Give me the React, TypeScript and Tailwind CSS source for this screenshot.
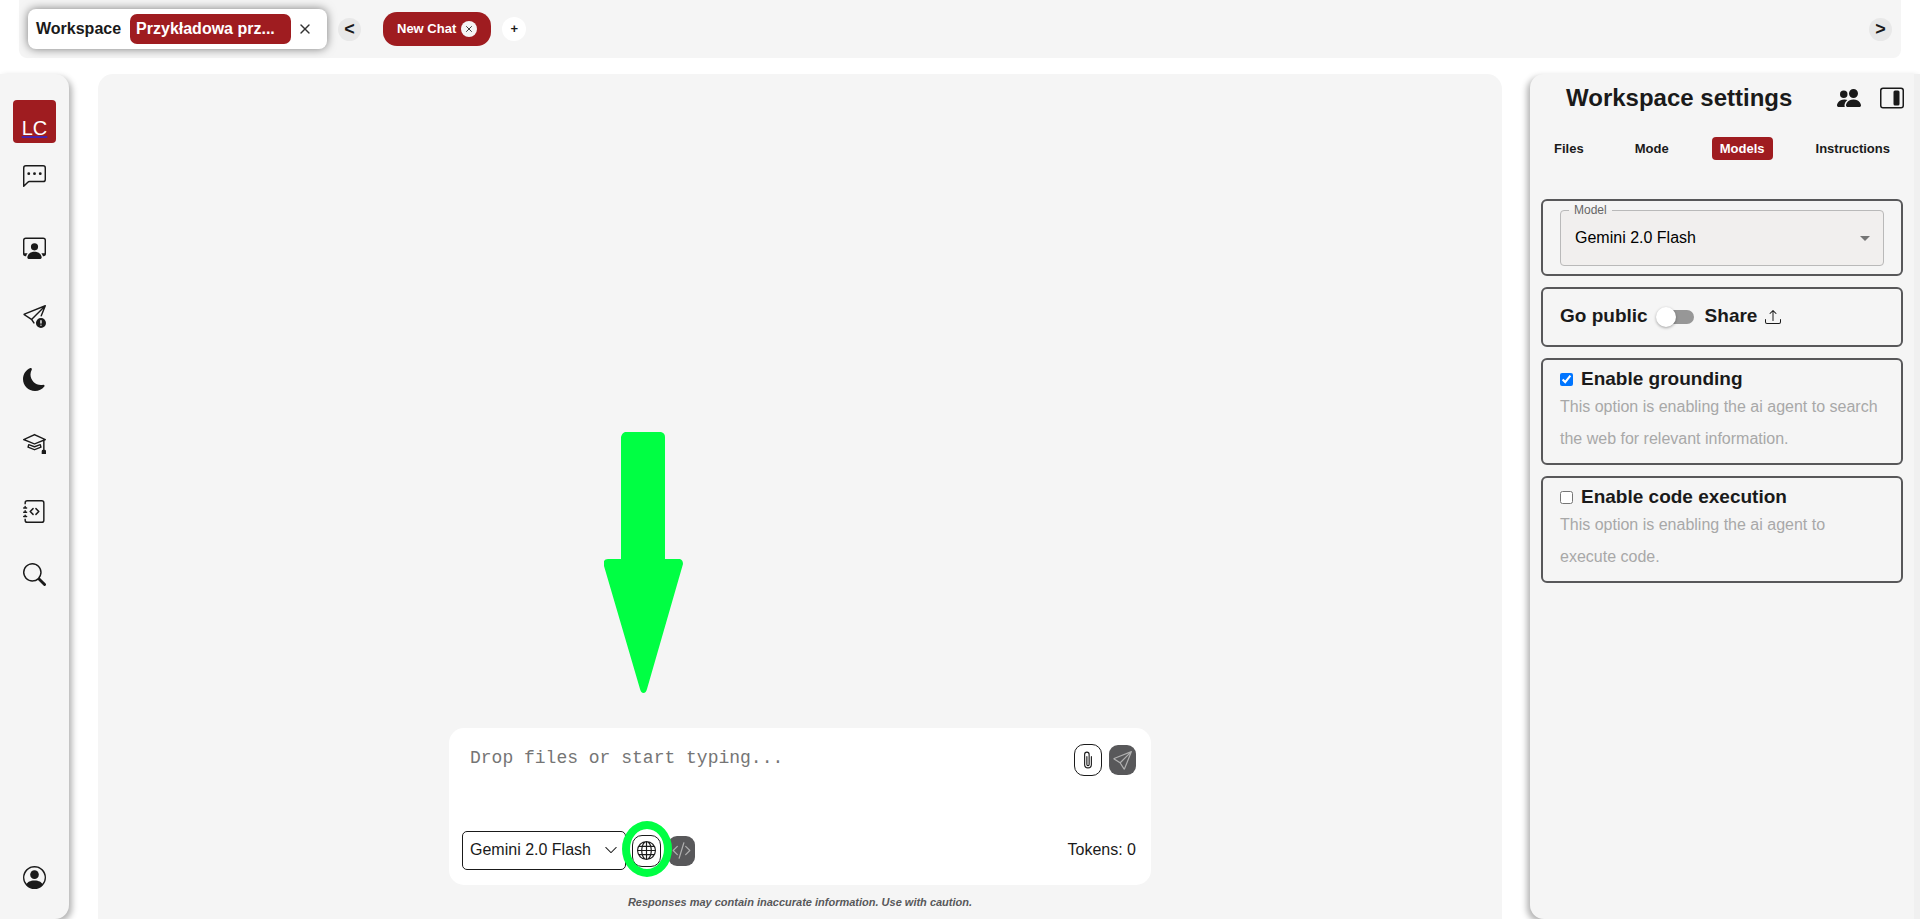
import React, { useState } from 'react';
import { X } from 'lucide-react';
import {
  BsChatLeftDots,
  BsChevronDown,
  BsCodeSlash,
  BsGlobe,
  BsJournalCode,
  BsLayoutSidebarInsetReverse,
  BsMoonFill,
  BsMortarboard,
  BsPaperclip,
  BsPeopleFill,
  BsPersonCircle,
  BsPersonWorkspace,
  BsSearch,
  BsSend,
  BsSendExclamation,
  BsUpload,
} from 'react-icons/bs';

const NAV_ITEMS = [
  { label: 'Chats', icon: BsChatLeftDots, className: 'mt-[22px]' },
  { label: 'Workspaces', icon: BsPersonWorkspace, className: 'mt-12' },
  { label: 'Report', icon: BsSendExclamation, className: 'mt-[46px]' },
  { label: 'Theme', icon: BsMoonFill, className: 'mt-10' },
  { label: 'Learn', icon: BsMortarboard, className: 'mt-10' },
  { label: 'Docs', icon: BsJournalCode, className: 'mt-[46px]' },
  { label: 'Search', icon: BsSearch, className: 'mt-10' },
];

const TABS = ['Files', 'Mode', 'Models', 'Instructions'];

const TopBar: React.FC = () => (
  <header className="mx-[19px] flex h-[58px] shrink-0 items-center rounded-b-lg bg-[#f5f5f5] px-[9px]">
    <div className="flex h-10 w-[299px] items-center rounded-lg bg-white pl-2 shadow-[0_0_10px_rgba(0,0,0,0.5)]">
      <span className="font-bold">Workspace</span>
      <button type="button" className="ml-[9px] h-[30px] w-[161px] whitespace-nowrap rounded-[7px] bg-[#9f1c20] px-[6px] text-left font-bold text-white">
        Przykładowa prz...
      </button>
      <button type="button" aria-label="Close workspace" className="ml-[6px]"><X size={16} strokeWidth={2} className="text-[#333333]" /></button>
    </div>
    <button type="button" className="ml-[11px] size-[23px] rounded-full bg-[#e8e8e8] text-lg font-bold leading-[22px]">&lt;</button>
    <div className="ml-[22px] flex h-[34px] items-center gap-[5px] rounded-[14px] bg-[#9f1c20] px-[14px]">
      <span className="text-[13px] font-bold text-white">New Chat</span>
      <button type="button" aria-label="Close chat" className="flex size-4 items-center justify-center rounded-full bg-[#f5f5f5]"><X size={10} strokeWidth={2} /></button>
    </div>
    <button type="button" className="ml-[11px] size-6 rounded-full bg-white text-[13px] font-bold leading-[22px]">+</button>
    <button type="button" className="ml-auto size-[23px] rounded-full bg-[#e8e8e8] text-lg font-bold leading-[22px]">&gt;</button>
  </header>
);

const Sidebar: React.FC = () => (
  <nav className="flex w-[69px] shrink-0 flex-col items-center rounded-r-[14px] bg-[#f5f5f5] pb-[30px] pt-[26px] shadow-[3px_3px_6px_rgba(0,0,0,0.3)]">
    <a href="#" className="flex size-[43px] items-end justify-center rounded bg-[#9f1c20] pb-[3px] text-xl leading-6 text-white underline decoration-[#4a22a8] underline-offset-1">LC</a>
    {NAV_ITEMS.map(({ label, icon: Icon, className }) => (
      <button key={label} type="button" aria-label={label} className={className}><Icon size={23} /></button>
    ))}
    <button type="button" aria-label="Account" className="mt-auto"><BsPersonCircle size={23} /></button>
  </nav>
);

const Composer: React.FC = () => {
  const [text, setText] = useState('');

  return (
    <div className="relative flex h-[157px] w-1/2 flex-col justify-between rounded-[15px] bg-white pb-[15px] pl-[13px] pr-[15px] pt-4">
      <div className="flex items-start">
        <textarea
          aria-label="Message"
          value={text}
          onChange={e => setText(e.target.value)}
          placeholder="Drop files or start typing..."
          className="h-14 flex-1 resize-none pl-2 pt-[2px] font-['Liberation_Mono',monospace] text-lg leading-6 outline-none placeholder:text-[#757575]"
        />
        <div className="flex items-center gap-[7px]">
          <button type="button" aria-label="Attach file" className="flex h-8 w-7 items-center justify-center rounded-[10px] border border-[#1a1a1a]"><BsPaperclip size={18} /></button>
          <button type="button" aria-label="Send" className="flex h-[30px] w-[27px] items-center justify-center rounded-[9px] bg-[#58585a] text-[#b0b0b0]"><BsSend size={19} /></button>
        </div>
      </div>
      <div className="flex items-center">
        <div className="relative">
          <select aria-label="Chat model" className="h-[39px] w-[164px] appearance-none rounded-[5px] border border-[#1a1a1a] pb-[2px] pl-[7px]">
            <option>Gemini 2.0 Flash</option>
          </select>
          <BsChevronDown size={14} className="pointer-events-none absolute right-2 top-3" />
        </div>
        <button type="button" aria-label="Grounding" className="ml-[6px] flex h-8 w-[29px] items-center justify-center rounded-[10px] border border-[#1a1a1a]"><BsGlobe size={19} /></button>
        <button type="button" aria-label="Code execution" className="ml-[7px] flex h-[30px] w-[27px] items-center justify-center rounded-[9px] bg-[#58585a] text-[#b0b0b0]"><BsCodeSlash size={19} /></button>
        <span className="ml-auto pb-[2px]">Tokens: 0</span>
      </div>

      {/* pointer and ring around the grounding button */}
      <svg className="pointer-events-none absolute -top-[296px] left-[155px]" width="79" height="261" viewBox="0 0 79 261" fill="#00ff43">
        <path d="M21 0H57Q61 1 61 5V127H76Q79 128 79 132L43 257Q42 261 39.500 261Q37 261 36 257L0 134V129Q1 127 4 127H17V5Q18 1 21 0Z" />
      </svg>
      <div className="pointer-events-none absolute bottom-2 left-[173px] h-14 w-[50px] rounded-[50%] border-8 border-[#00ff43]" />
    </div>
  );
};

const OptionCard: React.FC<{ id: string; title: string; text: string; defaultChecked?: boolean }> = ({ id, title, text, defaultChecked }) => (
  <div className="h-[107px] rounded-md border-2 border-[#58585a] px-[17px] pt-[7px]">
    <div className="flex items-center gap-2">
      <input id={id} type="checkbox" defaultChecked={defaultChecked} className="size-[13px]" />
      <label htmlFor={id} className="text-[19px] font-bold leading-6">{title}</label>
    </div>
    <p className="leading-8 text-[#a8a8a8]">{text}</p>
  </div>
);

const SettingsPanel: React.FC = () => {
  const [tab, setTab] = useState('Models');
  const [isPublic, setIsPublic] = useState(false);

  return (
    <aside className="flex w-[390px] shrink-0 rounded-l-[14px] bg-[#f5f5f5] shadow-[-3px_3px_6px_rgba(0,0,0,0.3)]">
      <div className="flex-1 px-[11px]">
        <div className="flex h-[47px] items-center pl-[25px]">
          <h1 className="text-2xl font-bold">Workspace settings</h1>
          <button type="button" aria-label="Members" className="ml-auto"><BsPeopleFill size={24} /></button>
          <button type="button" aria-label="Toggle panel" className="-mr-px ml-[19px]"><BsLayoutSidebarInsetReverse size={24} /></button>
        </div>
        <div className="mt-4 flex justify-between px-[5px] text-[13px] font-bold">
          {TABS.map(name => (
            <button
              key={name}
              type="button"
              onClick={() => setTab(name)}
              className={`h-[23px] rounded px-2 ${tab === name ? 'bg-[#9f1c20] text-white' : ''}`}
            >
              {name}
            </button>
          ))}
        </div>

        <div className="mt-[39px] flex flex-col gap-[11px]">
          <div className="h-[77px] rounded-md border-2 border-[#58585a] px-[17px] pt-[3px]">
            <fieldset className="relative h-[62px] rounded border border-[#b9b9b9] bg-[#f1efee]">
              <legend className="ml-2 h-3 px-[5px] text-xs leading-3 text-[#666666]"><label htmlFor="model">Model</label></legend>
              <select id="model" className="h-[46px] w-full appearance-none pb-[2px] pl-[14px] text-black">
                <option>Gemini 2.0 Flash</option>
              </select>
              <svg className="pointer-events-none absolute right-[13px] top-5" width="10" height="5" viewBox="0 0 10 5" fill="#757575"><path d="M0 0h10L5 5z" /></svg>
            </fieldset>
          </div>

          <div className="flex h-[60px] items-center rounded-md border-2 border-[#58585a] px-[17px] pb-px text-[19px] font-bold">
            <label htmlFor="public">Go public</label>
            <span className="relative ml-2 flex h-5 w-[38px] items-center">
              <input id="public" type="checkbox" role="switch" checked={isPublic} onChange={e => setIsPublic(e.target.checked)} className="peer ml-1 h-[14px] w-[34px] appearance-none rounded-full bg-[#979797]" />
              <span className="pointer-events-none absolute left-0 size-5 rounded-full bg-white shadow-[0_1px_3px_rgba(0,0,0,0.35)] peer-checked:left-[18px]" />
            </span>
            <button type="button" className="ml-[11px] flex items-center gap-2">Share <BsUpload size={16} /></button>
          </div>

          <OptionCard id="grounding" title="Enable grounding" text="This option is enabling the ai agent to search the web for relevant information." defaultChecked />
          <OptionCard id="code" title="Enable code execution" text="This option is enabling the ai agent to execute code." />
        </div>
      </div>
      <div className="w-[6px] bg-[#f0f0f0]" />
    </aside>
  );
};

export default function App() {
  return (
    <div className="flex h-screen flex-col overflow-hidden bg-white font-['Liberation_Sans',Arial,sans-serif] text-base text-[#1a1a1a]">
      <TopBar />
      <div className="mt-4 flex min-h-0 flex-1">
        <Sidebar />
        <main className="ml-[29px] mr-7 flex flex-1 flex-col items-center justify-end rounded-t-[15px] bg-[#f5f5f5]">
          <Composer />
          <p className="my-[9px] text-[11px] font-bold italic leading-4 text-[#58585a]">Responses may contain inaccurate information. Use with caution.</p>
        </main>
        <SettingsPanel />
      </div>
    </div>
  );
}
